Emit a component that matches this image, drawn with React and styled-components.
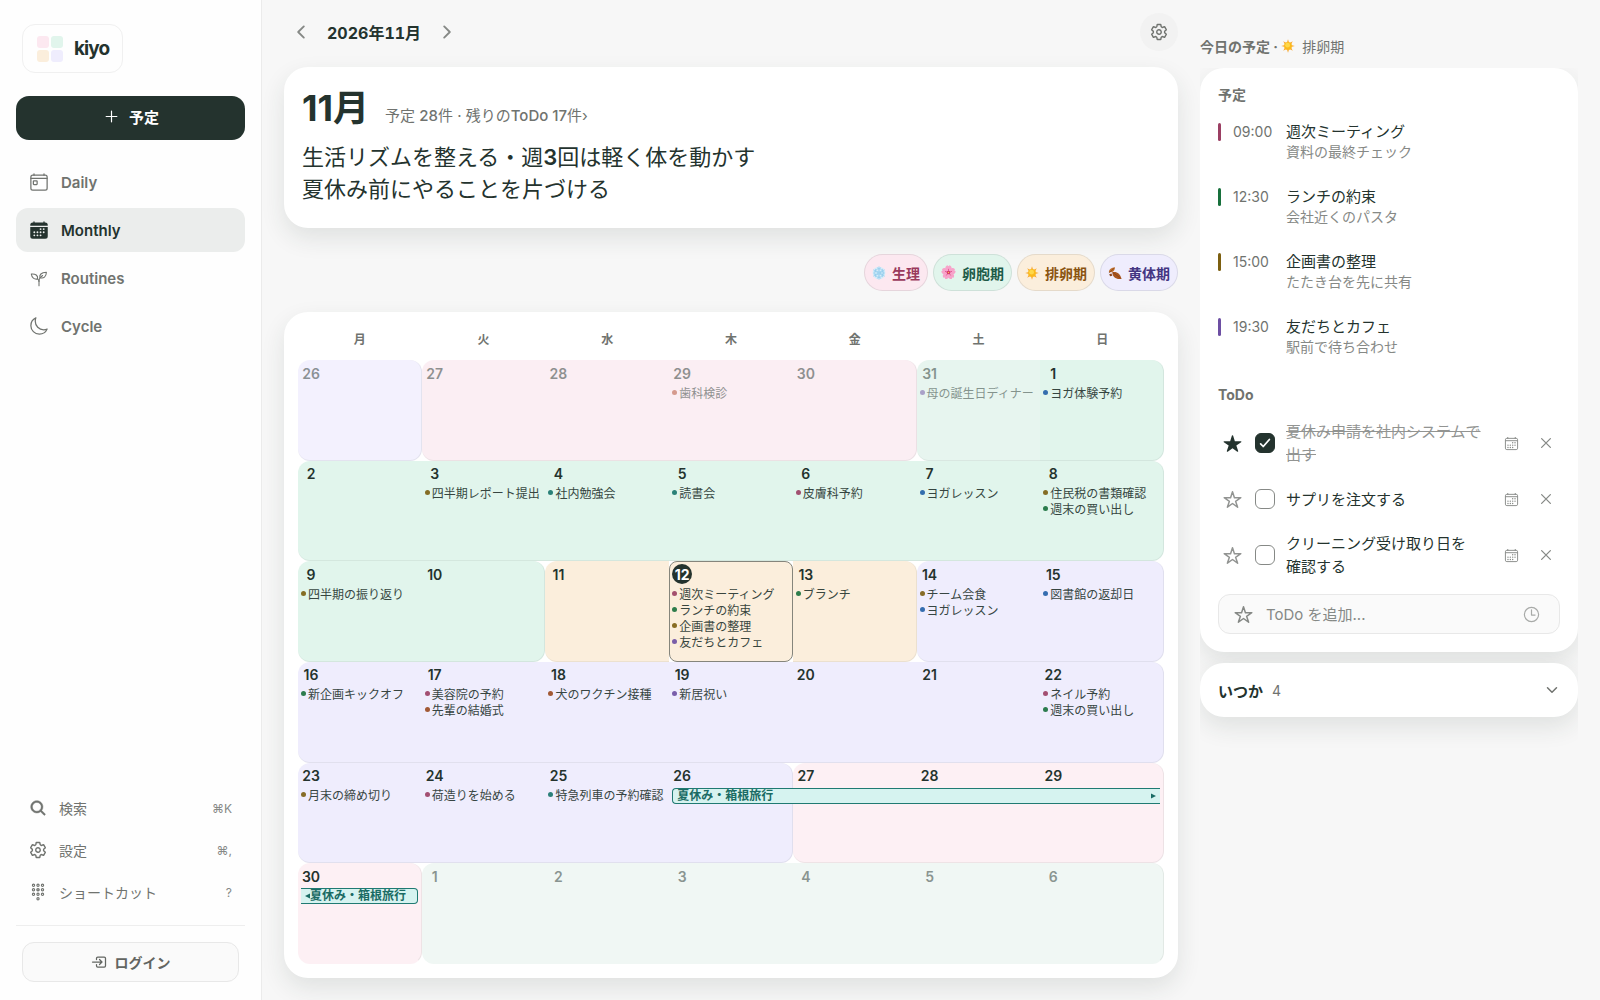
import React, { useState } from 'react'
import styled, { createGlobalStyle, css } from 'styled-components'
import {
  IoAdd,
  IoCalendar,
  IoCalendarOutline,
  IoCheckmark,
  IoChevronBack,
  IoChevronDown,
  IoChevronForward,
  IoCloseOutline,
  IoEnterOutline,
  IoKeypadOutline,
  IoMoonOutline,
  IoSearch,
  IoSettingsOutline,
  IoStar,
  IoStarOutline,
  IoTimeOutline,
  IoTodayOutline,
} from 'react-icons/io5'

const GlobalStyle = createGlobalStyle`
  *, *::before, *::after { box-sizing: border-box; }
  body {
    margin: 0;
    background: #f7f7f7;
    color: #24332e;
    font-family: Inter, "Noto Sans CJK JP", sans-serif;
    font-size: 14px;
    -webkit-font-smoothing: antialiased;
  }
  button, input { font: inherit; color: inherit; }
  button { padding: 0; border: 0; background: none; cursor: pointer; }
  h1, h2, h3, p, ul { margin: 0; padding: 0; }
  ul { list-style: none; }
  a { color: inherit; text-decoration: none; }
`

/* Shell */
const Layout = styled.div`
  display: flex;
  min-height: 100vh;
`

const Sidebar = styled.aside`
  flex: 0 0 262px;
  display: flex;
  flex-direction: column;
  height: 100vh;
  position: sticky;
  top: 0;
  padding: 24px 16px 18px;
  background: #fefefe;
  border-right: 1px solid #ebebeb;
`

const Logo = styled.a`
  align-self: flex-start;
  display: flex;
  align-items: center;
  gap: 10px;
  height: 49px;
  margin: 0 6px 23px;
  padding: 0 13px;
  border: 1px solid #f0f0f0;
  border-radius: 13px;
  font-size: 19px;
  font-weight: 700;
  letter-spacing: -0.05em;
`

const NewButton = styled.button`
  display: flex;
  align-items: center;
  justify-content: center;
  gap: 8px;
  flex: 0 0 44px;
  margin-bottom: 20px;
  padding-bottom: 4px;
  border-radius: 13px;
  background: #24332e;
  color: #fff;
  font-size: 15px;
  font-weight: 700;
  svg { font-size: 19px; }
`

const Nav = styled.nav`
  display: flex;
  flex-direction: column;
  gap: 4px;
`

const NavItem = styled.a`
  display: flex;
  align-items: center;
  gap: 12px;
  height: 44px;
  padding: 0 13px;
  border-radius: 12px;
  font-size: 15px;
  font-weight: 600;
  color: ${({ $active }) => ($active ? '#24332e' : '#70736f')};
  background: ${({ $active }) => ($active ? '#ebedec' : 'transparent')};
  svg { width: 20px; height: 20px; }
`

const Tools = styled.div`
  display: flex;
  flex-direction: column;
  margin-top: auto;
  padding-bottom: 12px;
  border-bottom: 1px solid #eeeeee;
`

const ToolButton = styled.button`
  display: flex;
  align-items: center;
  gap: 12px;
  height: 42px;
  padding: 0 13px;
  color: #70736f;
  text-align: left;
  svg { width: 18px; height: 18px; }
  path { stroke-width: ${({ $stroke }) => $stroke || 40}px; }
  kbd {
    margin-left: auto;
    font-family: inherit;
    font-size: 12px;
    color: #868986;
  }
`

const LoginButton = styled.button`
  display: flex;
  align-items: center;
  justify-content: center;
  gap: 8px;
  flex: 0 0 40px;
  margin: 16px 6px 0;
  border: 1px solid #e8e8e8;
  border-radius: 12px;
  background: #fafafa;
  color: #626561;
  font-weight: 700;
  svg { font-size: 16px; }
  path { stroke-width: 40px; }
`

const Main = styled.main`
  flex: 1;
  min-width: 0;
  display: flex;
  flex-direction: column;
  padding: 13px 22px 22px;
`

const Panel = styled.aside`
  flex: 0 0 400px;
  padding: 36px 22px 22px 0;
`

const Card = styled.section`
  border-radius: 24px;
  background: #fff;
  box-shadow: 0 10px 24px rgba(36, 51, 46, 0.11);
`

/* Month header */
const MonthBar = styled.header`
  display: flex;
  align-items: center;
  gap: 16px;
  height: 38px;
  margin-bottom: 16px;
  padding-left: 7px;
  h1 {
    font-size: 16px;
    font-weight: 700;
    font-variant-numeric: tabular-nums;
  }
`

const ArrowButton = styled.button`
  display: flex;
  color: #868986;
  font-size: 20px;
`

const RoundButton = styled.button`
  display: flex;
  align-items: center;
  justify-content: center;
  width: 38px;
  height: 38px;
  margin-left: auto;
  border-radius: 50%;
  background: #f2f2f2;
  color: #70736f;
  font-size: 18px;
  path { stroke-width: 40px; }
`

const Summary = styled(Card)`
  padding: 19px 18px 23px;
`

const SummaryTop = styled.div`
  display: flex;
  align-items: baseline;
  gap: 16px;
  height: 55px;
  line-height: 44px;
  h2 {
    font-size: 36px;
    font-weight: 700;
  }
  a { color: #70736f; font-size: 15px; }
  b { font-weight: 500; }
`

const Goal = styled.p`
  font-size: 22px;
  line-height: 32px;
  b { font-weight: 600; }
`

const Legend = styled.ul`
  display: flex;
  justify-content: flex-end;
  gap: 5px;
  margin: 26px 0 21px;
`

const Chip = styled.li`
  display: flex;
  align-items: center;
  gap: 6px;
  height: 37px;
  padding: 0 7px;
  border: 1px solid rgba(36, 51, 46, 0.1);
  border-radius: 19px;
  background: ${({ $bg }) => $bg};
  color: ${({ $color }) => $color};
  font-weight: 700;
`

/* Calendar */
const CalendarCard = styled(Card)`
  flex: 1;
  display: flex;
  padding: 14px;
`

const Calendar = styled.table`
  flex: 1;
  min-width: 0;
  display: flex;
  flex-direction: column;
  thead { display: block; }
  tbody {
    flex: 1;
    display: grid;
    grid-template-rows: repeat(6, minmax(100px, 1fr));
  }
  tr {
    display: grid;
    grid-template-columns: repeat(7, minmax(0, 1fr));
  }
  th {
    padding: 0;
    height: 34px;
    line-height: 28px;
    font-size: 12px;
    font-weight: 700;
    color: #70736f;
  }
`

const Day = styled.td`
  min-width: 0;
  padding: 3px;
  background: ${({ $bg }) => $bg};
  border-bottom: 1px solid rgba(36, 51, 46, 0.07);
  ${({ $start }) => $start && css`
    border-top-left-radius: 12px;
    border-bottom-left-radius: 12px;
  `}
  ${({ $end }) => $end && css`
    border-top-right-radius: 12px;
    border-bottom-right-radius: 12px;
    border-right: 1px solid rgba(36, 51, 46, 0.07);
  `}
  ${({ $today }) => $today && css`
    padding: 2px;
    border: 1px solid #85857c;
    border-radius: 8px;
  `}
  tr:last-child > & { border-bottom-color: transparent; }
`

const DayNumber = styled.time`
  display: flex;
  align-items: center;
  justify-content: center;
  width: 20px;
  height: 20px;
  margin-bottom: 1px;
  border-radius: 50%;
  font-size: 14px;
  font-weight: 600;
  opacity: ${({ $outside }) => ($outside ? 0.5 : 1)};
  ${({ $today }) => $today && css`
    background: #24332e;
    color: #fff;
    font-weight: 700;
  `}
`

const DayEvent = styled.div`
  display: flex;
  align-items: center;
  gap: 2px;
  height: 16px;
  font-size: 12px;
  white-space: nowrap;
  opacity: ${({ $outside }) => ($outside ? 0.5 : 0.9)};
  &::before {
    content: '';
    flex: 0 0 5px;
    height: 5px;
    border-radius: 50%;
    background: ${({ $color }) => $color};
  }
`

const Trip = styled.div`
  display: flex;
  align-items: center;
  height: 16px;
  margin: 2px ${({ $part }) => ($part === 'first' || $part === 'middle' ? '-4px' : '0')} 0
    ${({ $part }) => ($part === 'middle' || $part === 'last' ? '-3px' : '0')};
  padding: 0 4px;
  border: solid #1f7a72;
  border-width: 1px 0;
  background: #d6f3f0;
  color: #1a6b64;
  font-size: 12px;
  line-height: 14px;
  font-weight: 700;
  white-space: nowrap;
  ${({ $part }) => $part === 'first' && css`
    border-left-width: 1px;
    border-radius: 4px 0 0 4px;
  `}
  ${({ $part }) => $part === 'last' && css`justify-content: flex-end;`}
  ${({ $part }) => $part === 'tail' && css`
    border-right-width: 1px;
    border-radius: 0 4px 4px 0;
  `}
`

const Pointer = styled.svg`
  flex: none;
  width: 5px;
  height: 6px;
  fill: currentColor;
`

/* Today panel */
const PanelTitle = styled.h2`
  display: flex;
  align-items: center;
  height: 20px;
  margin-bottom: 12px;
  font-size: 14px;
  font-weight: 700;
  color: #70736f;
  svg { margin-right: 7px; }
  span { font-weight: 400; }
`

const Clip = styled.div`
  overflow: hidden;
  padding-bottom: 40px;
`

const TodayCard = styled(Card)`
  margin-bottom: 11px;
  padding: 16px 18px 18px;
`

const SectionTitle = styled.h3`
  height: 22px;
  line-height: 22px;
  font-size: 14px;
  font-weight: 700;
  color: #70736f;
`

const Schedule = styled.ul`
  margin: 15px 0 3px;
`

const ScheduleItem = styled.li`
  display: grid;
  grid-template-columns: 3px 38px 1fr;
  column-gap: 12px;
  height: 65px;
  line-height: 21px;
  &::before {
    content: '';
    height: 18px;
    margin-top: 2px;
    border-radius: 2px;
    background: ${({ $color }) => $color};
  }
  time { color: #70736f; }
  h4 {
    margin: 0 0 0 3px;
    font-size: 15px;
    font-weight: 400;
  }
  p {
    margin-left: 3px;
    line-height: 20px;
    color: #868986;
  }
`

const TodoList = styled.ul`
  display: flex;
  flex-direction: column;
  gap: 4px;
  margin: 7px 0 9px;
`

const TodoItem = styled.li`
  display: flex;
  align-items: center;
  min-height: 44px;
  padding: 7px 0;
`

const StarButton = styled.button`
  display: flex;
  margin: 0 13px 0 5px;
  font-size: 19px;
  color: ${({ $on }) => ($on ? '#24332e' : '#929492')};
  path { stroke-width: ${({ $on }) => ($on ? 0 : '40px')}; }
`

const CheckLabel = styled.label`
  flex: 1;
  display: flex;
  align-items: center;
  gap: 11px;
  font-size: 15px;
  line-height: 23px;
  white-space: pre-line;
  color: ${({ $done }) => ($done ? '#929492' : '#24332e')};
  text-decoration: ${({ $done }) => ($done ? 'line-through' : 'none')};
`

const CheckWrap = styled.span`
  display: grid;
  flex: none;
  > * { grid-area: 1 / 1; place-self: center; }
  svg { color: #fff; font-size: 14px; pointer-events: none; }
  path { stroke-width: 64px; }
`

const Checkbox = styled.input`
  appearance: none;
  width: 20px;
  height: 20px;
  margin: 0;
  border: 1px solid #868986;
  border-radius: 6px;
  background: #fff;
  &:checked {
    border-color: #24332e;
    background: #24332e;
  }
`

const IconButton = styled.button`
  display: flex;
  align-items: center;
  justify-content: center;
  width: 28px;
  height: 28px;
  margin-left: 7px;
  color: #868986;
  font-size: ${({ $size }) => $size}px;
`

const AddTodo = styled.form`
  display: flex;
  align-items: center;
  gap: 13px;
  height: 40px;
  padding: 0 18px 0 15px;
  border: 1px solid #e8e8e8;
  border-radius: 12px;
  background: #fafafa;
  color: #868986;
  > svg { flex: none; font-size: 19px; }
  > svg:first-child path { stroke-width: 40px; }
  > svg:last-child { font-size: 19px; color: #a8aaa8; }
  input {
    flex: 1;
    min-width: 0;
    padding: 0;
    border: 0;
    outline: 0;
    background: none;
    font-size: 15px;
  }
  input::placeholder { color: #868986; opacity: 1; }
`

const SomedayCard = styled(Card)``

const SomedayButton = styled.button`
  display: flex;
  align-items: center;
  gap: 9px;
  width: 100%;
  height: 54px;
  padding: 0 18px;
  font-size: 15px;
  font-weight: 700;
  span { font-size: 14px; font-weight: 400; color: #70736f; }
  svg { margin-left: auto; font-size: 16px; color: #70736f; }
`

/* Drawings */
const LogoMark = () => (
  <svg width="28" height="28" viewBox="0 0 28 28" aria-hidden="true">
    <rect x="1" y="1" width="12" height="12" rx="3" fill="#fce8f0" />
    <rect x="15" y="1" width="12" height="12" rx="3" fill="#e1f5ec" />
    <rect x="1" y="15" width="12" height="12" rx="3" fill="#fbeedc" />
    <rect x="15" y="15" width="12" height="12" rx="3" fill="#efedfd" />
  </svg>
)

const Sprout = () => (
  <svg viewBox="0 0 20 20" fill="none" stroke="currentColor" strokeWidth="1.1" strokeLinecap="round" strokeLinejoin="round" aria-hidden="true">
    <path d="M10 17.700v-4.700c0-1.500.4-2.500 1.300-3.500l2.300-2" />
    <path d="M10.900 9.700C10.200 6.800 12 4.500 17.400 4.300c-.2 4.600-2.700 6.600-6.500 5.400z" />
    <path d="M8.600 10.900C5.200 11.700 2.800 9.600 2.300 6c4.300-.4 6.800 1.500 6.300 4.900zM8.600 10.900c.9.600 1.400 1.500 1.400 2.600" />
  </svg>
)

const Crystal = () => (
  <svg width="14" height="14" viewBox="0 0 14 14" aria-hidden="true">
    <circle cx="7" cy="7" r="6.300" fill="#d5ecf9" />
    <g stroke="#8fcbed" strokeWidth="0.700" fill="none" strokeLinecap="round">
      <path d="M7 .8v12.400M1.600 3.900l10.800 6.200M12.400 3.900L1.600 10.100" />
      <path d="M5.400 1.800L7 3.300l1.600-1.500M5.400 12.200L7 10.700l1.600 1.500M1.900 6.200l2-.8-.4-2.100M12.100 7.800l-2 .8.400 2.100M12.100 6.200l-2-.8.400-2.100M1.900 7.800l2 .8-.4 2.100" />
      <circle cx="7" cy="7" r="2" />
      <circle cx="7" cy="7" r="4.200" />
    </g>
  </svg>
)

const Blossom = () => (
  <svg width="15" height="15" viewBox="0 0 14 14" aria-hidden="true">
    {[0, 72, 144, 216, 288].map((deg) => (
      <g key={deg} transform={`rotate(${deg} 7 7)`}>
        <path d="M7 7C3.200 4.800 3.400 1.300 6 .3l1 .9 1-.9c2.600 1 2.800 4.500-1 6.700z" fill="#f7a3ca" />
        <path d="M7 6.500V3.600" stroke="#dc4a88" strokeWidth="0.700" />
      </g>
    ))}
    <circle cx="7" cy="7" r="1.600" fill="#d42e68" />
    <circle cx="7" cy="7" r="0.700" fill="#f7c64b" />
  </svg>
)

const Sun = () => (
  <svg width="14" height="14" viewBox="0 0 14 14" aria-hidden="true">
    {[0, 45, 90, 135, 180, 225, 270, 315].map((deg) => (
      <path key={deg} d="M7 .2l1.100 3.600H5.900z" fill="#f9a933" transform={`rotate(${deg} 7 7)`} />
    ))}
    <circle cx="7" cy="7" r="3.900" fill="#fbb91c" />
    <circle cx="6.600" cy="6.200" r="2.400" fill="#ffd848" />
  </svg>
)

const Leaves = () => (
  <svg width="14" height="14" viewBox="0 0 14 14" aria-hidden="true">
    <path d="M.8 6.200C1 3.400 3.400 1.300 7 1.200 6.900 4.700 4.500 7 .8 6.200z" fill="#bd6d2b" />
    <path d="M4.300 6.300c4.100-1.300 8 1.400 9.300 6.600-5 1-9.300-1.500-9.300-6.600z" fill="#a9561f" />
    <path d="M.9 7L6 2.300M4.600 6.300l7.800 5.700" stroke="#7b3d15" strokeWidth="0.600" fill="none" />
    <path d="M1.200 8.300l2.300-.7.800 2.200-2.200.5z" fill="#8d4519" />
  </svg>
)

/* Data */
const PHASES = [
  { label: '生理', icon: <Crystal />, bg: '#fce8f0', color: '#9a3a5d' },
  { label: '卵胞期', icon: <Blossom />, bg: '#e1f5ec', color: '#1d5c48' },
  { label: '排卵期', icon: <Sun />, bg: '#fbeedc', color: '#8a5410' },
  { label: '黄体期', icon: <Leaves />, bg: '#efedfd', color: '#443682' },
]

const BG = {
  lutealOut: '#f3f1fe',
  periodOut: '#fbeef3',
  follicularOut: '#e7f5ef',
  follicular: '#e1f5ec',
  ovulation: '#fbeedc',
  luteal: '#efedfd',
  forecast: '#fdf0f4',
  forecastOut: '#f0f7f4',
}

const ROSE = '#9b3f63'
const GREEN = '#18703c'
const OLIVE = '#7c5f10'
const PURPLE = '#6d4fa3'
const BLUE = '#2160a8'
const TEAL = '#17756c'
const RUST = '#9a4a20'

const WEEKDAYS = ['月', '火', '水', '木', '金', '土', '日']

// each run: [background, days]; start and end round the corners
const day = (n, events = [], more = {}) => ({ n, events, ...more })
const out = (n, events) => day(n, events, { outside: true })

const WEEKS = [
  [
    ['lutealOut', [out(26)]],
    ['periodOut', [out(27), out(28), out(29, [['歯科検診', '#b0482a']]), out(30)]],
    ['follicular', [
      { ...out(31, [['母の誕生日ディナー', PURPLE]]), bg: 'follicularOut' },
      day(1, [['ヨガ体験予約', BLUE]]),
    ]],
  ],
  [
    ['follicular', [
      day(2),
      day(3, [['四半期レポート提出', OLIVE]]),
      day(4, [['社内勉強会', TEAL]]),
      day(5, [['読書会', TEAL]]),
      day(6, [['皮膚科予約', ROSE]]),
      day(7, [['ヨガレッスン', BLUE]]),
      day(8, [['住民税の書類確認', OLIVE], ['週末の買い出し', GREEN]]),
    ]],
  ],
  [
    ['follicular', [day(9, [['四半期の振り返り', OLIVE]]), day(10)]],
    ['ovulation', [
      day(11),
      day(12, [['週次ミーティング', ROSE], ['ランチの約束', GREEN], ['企画書の整理', OLIVE], ['友だちとカフェ', PURPLE]], { today: true }),
      day(13, [['ブランチ', GREEN]]),
    ]],
    ['luteal', [day(14, [['チーム会食', OLIVE], ['ヨガレッスン', BLUE]]), day(15, [['図書館の返却日', BLUE]])]],
  ],
  [
    ['luteal', [
      day(16, [['新企画キックオフ', GREEN]]),
      day(17, [['美容院の予約', ROSE], ['先輩の結婚式', RUST]]),
      day(18, [['犬のワクチン接種', RUST]]),
      day(19, [['新居祝い', PURPLE]]),
      day(20),
      day(21),
      day(22, [['ネイル予約', ROSE], ['週末の買い出し', GREEN]]),
    ]],
  ],
  [
    ['luteal', [
      day(23, [['月末の締め切り', OLIVE]]),
      day(24, [['荷造りを始める', ROSE]]),
      day(25, [['特急列車の予約確認', TEAL]]),
      day(26, [], { trip: 'first' }),
    ]],
    ['forecast', [day(27, [], { trip: 'middle' }), day(28, [], { trip: 'middle' }), day(29, [], { trip: 'last' })]],
  ],
  [
    ['forecast', [day(30, [], { trip: 'tail' })]],
    ['forecastOut', [out(1), out(2), out(3), out(4), out(5), out(6)]],
  ],
]

const SCHEDULE = [
  { time: '09:00', title: '週次ミーティング', note: '資料の最終チェック', color: ROSE },
  { time: '12:30', title: 'ランチの約束', note: '会社近くのパスタ', color: GREEN },
  { time: '15:00', title: '企画書の整理', note: 'たたき台を先に共有', color: OLIVE },
  { time: '19:30', title: '友だちとカフェ', note: '駅前で待ち合わせ', color: PURPLE },
]

const TODOS = [
  { id: 1, text: '夏休み申請を社内システムで\n出す', starred: true, done: true },
  { id: 2, text: 'サプリを注文する', starred: false, done: false },
  { id: 3, text: 'クリーニング受け取り日を\n確認する', starred: false, done: false },
]

const TripBar = ({ part }) => (
  <Trip $part={part}>
    {part === 'tail' && <Pointer viewBox="0 0 5 6"><path d="M5 .5v5L0 3z" /></Pointer>}
    {(part === 'first' || part === 'tail') && '夏休み・箱根旅行'}
    {part === 'last' && <Pointer viewBox="0 0 5 6"><path d="M0 .5v5L5 3z" /></Pointer>}
  </Trip>
)

const DayCell = ({ item, bg, start, end }) => (
  <Day $bg={BG[item.bg || bg]} $start={start} $end={end} $today={item.today}>
    <DayNumber $outside={item.outside} $today={item.today}>{item.n}</DayNumber>
    {item.trip && <TripBar part={item.trip} />}
    {item.events.map(([title, color]) => (
      <DayEvent key={title} $color={color} $outside={item.outside}>{title}</DayEvent>
    ))}
  </Day>
)

const MonthCalendar = () => (
  <CalendarCard>
    <Calendar>
      <thead>
        <tr>{WEEKDAYS.map((name) => <th key={name} scope="col">{name}</th>)}</tr>
      </thead>
      <tbody>
        {WEEKS.map((runs, w) => (
          <tr key={w}>
            {runs.map(([bg, days]) =>
              days.map((item, i) => (
                <DayCell key={item.n} item={item} bg={bg} start={i === 0} end={i === days.length - 1} />
              ))
            )}
          </tr>
        ))}
      </tbody>
    </Calendar>
  </CalendarCard>
)

const SideMenu = () => (
  <Sidebar>
    <Logo href="#"><LogoMark />kiyo</Logo>
    <NewButton type="button"><IoAdd />予定</NewButton>
    <Nav>
      <NavItem href="#daily"><IoTodayOutline />Daily</NavItem>
      <NavItem href="#monthly" $active><IoCalendar />Monthly</NavItem>
      <NavItem href="#routines"><Sprout />Routines</NavItem>
      <NavItem href="#cycle"><IoMoonOutline />Cycle</NavItem>
    </Nav>
    <Tools>
      <ToolButton type="button" $stroke={12}><IoSearch />検索<kbd>⌘K</kbd></ToolButton>
      <ToolButton type="button"><IoSettingsOutline />設定<kbd>⌘,</kbd></ToolButton>
      <ToolButton type="button"><IoKeypadOutline />ショートカット<kbd>?</kbd></ToolButton>
    </Tools>
    <LoginButton type="button"><IoEnterOutline />ログイン</LoginButton>
  </Sidebar>
)

const TodayPanel = () => {
  const [todos, setTodos] = useState(TODOS)
  const toggle = (id, key) =>
    setTodos(todos.map((todo) => (todo.id === id ? { ...todo, [key]: !todo[key] } : todo)))
  const remove = (id) => setTodos(todos.filter((todo) => todo.id !== id))

  return (
    <Panel>
      <PanelTitle>今日の予定 ·&nbsp;<Sun /><span>排卵期</span></PanelTitle>
      <Clip>
        <TodayCard>
          <SectionTitle>予定</SectionTitle>
          <Schedule>
            {SCHEDULE.map((item) => (
              <ScheduleItem key={item.time} $color={item.color}>
                <time>{item.time}</time>
                <div>
                  <h4>{item.title}</h4>
                  <p>{item.note}</p>
                </div>
              </ScheduleItem>
            ))}
          </Schedule>
          <SectionTitle>ToDo</SectionTitle>
          <TodoList>
            {todos.map((todo) => (
              <TodoItem key={todo.id}>
                <StarButton type="button" aria-label="スター" $on={todo.starred} onClick={() => toggle(todo.id, 'starred')}>
                  {todo.starred ? <IoStar /> : <IoStarOutline />}
                </StarButton>
                <CheckLabel $done={todo.done}>
                  <CheckWrap>
                    <Checkbox type="checkbox" checked={todo.done} onChange={() => toggle(todo.id, 'done')} />
                    {todo.done && <IoCheckmark />}
                  </CheckWrap>
                  {todo.text}
                </CheckLabel>
                <IconButton type="button" aria-label="日付" $size={15}><IoCalendarOutline /></IconButton>
                <IconButton type="button" aria-label="削除" $size={20} onClick={() => remove(todo.id)}><IoCloseOutline /></IconButton>
              </TodoItem>
            ))}
          </TodoList>
          <AddTodo onSubmit={(e) => e.preventDefault()}>
            <IoStarOutline />
            <input type="text" aria-label="ToDo を追加" placeholder="ToDo を追加..." />
            <IoTimeOutline />
          </AddTodo>
        </TodayCard>
        <SomedayCard>
          <SomedayButton type="button">いつか<span>4</span><IoChevronDown /></SomedayButton>
        </SomedayCard>
      </Clip>
    </Panel>
  )
}

export default function App() {
  return (
    <Layout>
      <GlobalStyle />
      <SideMenu />
      <Main>
        <MonthBar>
          <ArrowButton type="button" aria-label="前の月"><IoChevronBack /></ArrowButton>
          <h1>2026年11月</h1>
          <ArrowButton type="button" aria-label="次の月"><IoChevronForward /></ArrowButton>
          <RoundButton type="button" aria-label="表示設定"><IoSettingsOutline /></RoundButton>
        </MonthBar>
        <Summary>
          <SummaryTop>
            <h2>11月</h2>
            <a href="#todo">予定 <b>28</b>件 · 残りの<b>ToDo 17</b>件›</a>
          </SummaryTop>
          <Goal>生活リズムを整える・週<b>3</b>回は軽く体を動かす</Goal>
          <Goal>夏休み前にやることを片づける</Goal>
        </Summary>
        <Legend>
          {PHASES.map((phase) => (
            <Chip key={phase.label} $bg={phase.bg} $color={phase.color}>{phase.icon}{phase.label}</Chip>
          ))}
        </Legend>
        <MonthCalendar />
      </Main>
      <TodayPanel />
    </Layout>
  )
}
